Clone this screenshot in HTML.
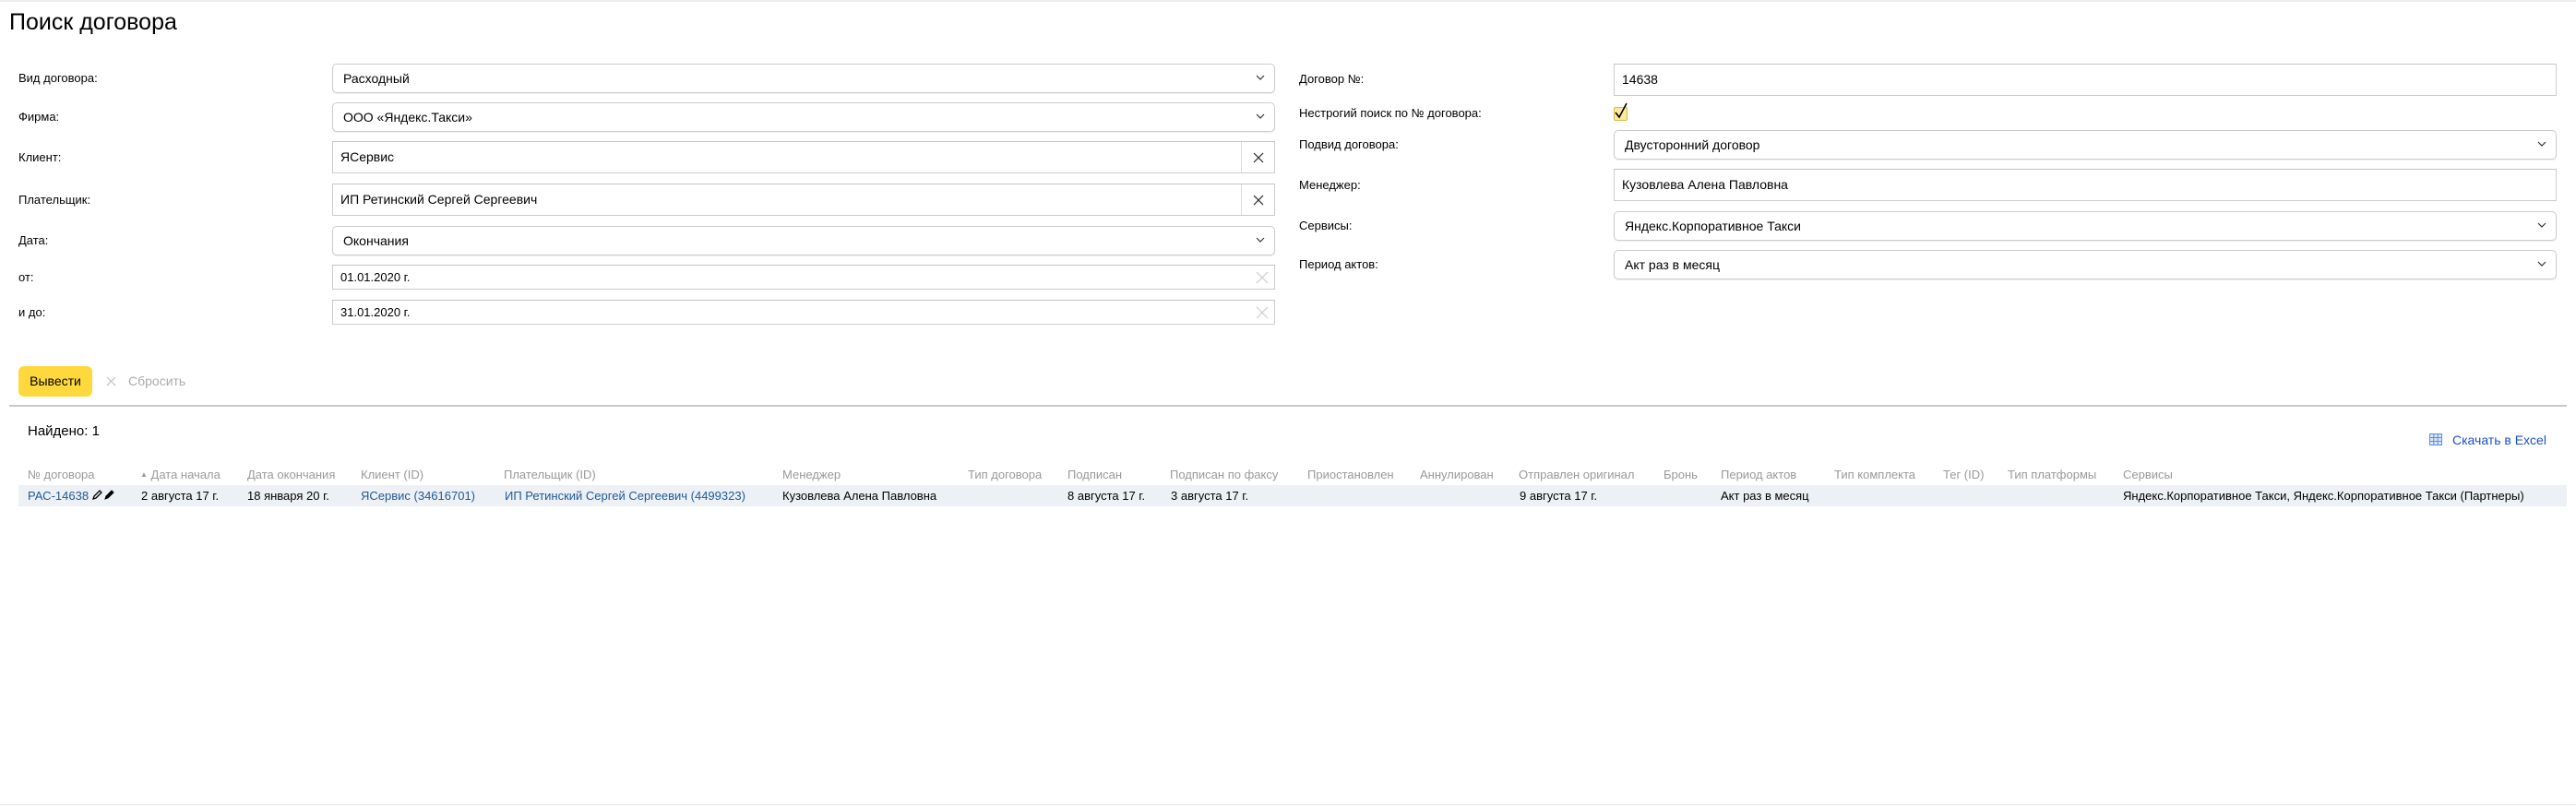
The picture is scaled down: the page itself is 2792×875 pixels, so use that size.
<!DOCTYPE html>
<html><head><meta charset="utf-8">
<style>
*{margin:0;padding:0;box-sizing:border-box}
body{width:2792px;height:875px;position:relative;background:#fff;font-family:"Liberation Sans",Arial,sans-serif;color:#000;overflow:hidden}
.a{position:absolute}
.top{left:0;top:0;width:2792px;height:2px;background:#eee}
.bot{left:0;top:872px;width:2792px;height:1px;background:#e5e5e5}
h1{position:absolute;left:10px;top:10px;font-size:25px;font-weight:normal;color:#000}
.lbl{position:absolute;font-size:13px;line-height:16px;color:#000}
.sel{position:absolute;border:1px solid #ccc;border-radius:5px;font-size:14px;padding-left:11px;box-shadow:0 1px 1px rgba(0,0,0,.08)}
.sel svg{position:absolute;right:10px;top:50%;margin-top:-4px}
.inp{position:absolute;border:1px solid #ccc;border-top-color:#c4c4c4;font-size:14px;padding-left:8px}
.clr{position:absolute;right:0;top:0;bottom:0;width:36px;border-left:1px solid #ddd}
.clr svg{position:absolute;left:50%;top:50%;margin:-6px 0 0 -6px}
.th{position:absolute;top:507px;font-size:13px;color:#999;line-height:16px;white-space:nowrap}
.td{position:absolute;top:530px;font-size:13px;line-height:16px;white-space:nowrap;color:#000}
.lnk{color:#1d5a93}
</style></head><body>
<div class="a top"></div>
<h1>Поиск договора</h1>

<div class="lbl" style="left:20px;top:77px">Вид договора:</div>
<div class="sel" style="left:360px;top:69px;width:1022px;height:32px;line-height:30px">Расходный<svg width="10" height="7" viewBox="0 0 10 7"><path d="M1 1l4 4 4-4" fill="none" stroke="#333" stroke-width="1.2"/></svg></div>
<div class="lbl" style="left:20px;top:119px">Фирма:</div>
<div class="sel" style="left:360px;top:111px;width:1022px;height:32px;line-height:30px">ООО «Яндекс.Такси»<svg width="10" height="7" viewBox="0 0 10 7"><path d="M1 1l4 4 4-4" fill="none" stroke="#333" stroke-width="1.2"/></svg></div>
<div class="lbl" style="left:20px;top:163px">Клиент:</div>
<div class="inp" style="left:360px;top:153px;width:1022px;height:35px;line-height:33px">ЯСервис<div class="clr"><svg width="12" height="12" viewBox="0 0 12 12"><path d="M1 1l10 10M11 1L1 11" stroke="#222" stroke-width="1.2"/></svg></div></div>
<div class="lbl" style="left:20px;top:209px">Плательщик:</div>
<div class="inp" style="left:360px;top:199px;width:1022px;height:35px;line-height:33px">ИП Ретинский Сергей Сергеевич<div class="clr"><svg width="12" height="12" viewBox="0 0 12 12"><path d="M1 1l10 10M11 1L1 11" stroke="#222" stroke-width="1.2"/></svg></div></div>
<div class="lbl" style="left:20px;top:253px">Дата:</div>
<div class="sel" style="left:360px;top:245px;width:1022px;height:32px;line-height:30px">Окончания<svg width="10" height="7" viewBox="0 0 10 7"><path d="M1 1l4 4 4-4" fill="none" stroke="#333" stroke-width="1.2"/></svg></div>
<div class="lbl" style="left:20px;top:293px">от:</div>
<div class="inp" style="left:360px;top:287px;width:1022px;height:27px;line-height:25px;font-size:13px">01.01.2020 г.<svg style="position:absolute;right:6px;top:6px" width="14" height="14" viewBox="0 0 14 14"><path d="M1 1l12 12M13 1L1 13" stroke="#ccc" stroke-width="1.2"/></svg></div>
<div class="lbl" style="left:20px;top:331px">и до:</div>
<div class="inp" style="left:360px;top:325px;width:1022px;height:27px;line-height:25px;font-size:13px">31.01.2020 г.<svg style="position:absolute;right:6px;top:6px" width="14" height="14" viewBox="0 0 14 14"><path d="M1 1l12 12M13 1L1 13" stroke="#ccc" stroke-width="1.2"/></svg></div>

<div class="lbl" style="left:1408px;top:78px">Договор №:</div>
<div class="inp" style="left:1749px;top:69px;width:1022px;height:35px;line-height:33px">14638</div>
<div class="lbl" style="left:1408px;top:115px">Нестрогий поиск по № договора:</div>
<div class="a" style="left:1749px;top:116px;width:15px;height:15px;background:#fde99a;border:1px solid #d9b94a;border-radius:2px"></div>
<svg class="a" style="left:1749px;top:111px" width="16" height="19" viewBox="0 0 16 19"><path d="M2 11l4 5L14 1" fill="none" stroke="#000" stroke-width="1.6"/></svg>
<div class="lbl" style="left:1408px;top:149px">Подвид договора:</div>
<div class="sel" style="left:1749px;top:141px;width:1022px;height:32px;line-height:30px">Двусторонний договор<svg width="10" height="7" viewBox="0 0 10 7"><path d="M1 1l4 4 4-4" fill="none" stroke="#333" stroke-width="1.2"/></svg></div>
<div class="lbl" style="left:1408px;top:193px">Менеджер:</div>
<div class="inp" style="left:1749px;top:183px;width:1022px;height:35px;line-height:33px">Кузовлева Алена Павловна</div>
<div class="lbl" style="left:1408px;top:237px">Сервисы:</div>
<div class="sel" style="left:1749px;top:229px;width:1022px;height:32px;line-height:30px">Яндекс.Корпоративное Такси<svg width="10" height="7" viewBox="0 0 10 7"><path d="M1 1l4 4 4-4" fill="none" stroke="#333" stroke-width="1.2"/></svg></div>
<div class="lbl" style="left:1408px;top:279px">Период актов:</div>
<div class="sel" style="left:1749px;top:271px;width:1022px;height:32px;line-height:30px">Акт раз в месяц<svg width="10" height="7" viewBox="0 0 10 7"><path d="M1 1l4 4 4-4" fill="none" stroke="#333" stroke-width="1.2"/></svg></div>

<div class="a" style="left:20px;top:397px;width:80px;height:33px;background:#ffd83d;border-radius:6px;font-size:14px;line-height:33px;text-align:center">Вывести</div>
<svg class="a" style="left:115px;top:408px" width="11" height="11" viewBox="0 0 11 11"><path d="M1 1l9 9M10 1L1 10" stroke="#bbb" stroke-width="1"/></svg>
<div class="a" style="left:139px;top:405px;font-size:14px;color:#aaa">Сбросить</div>
<div class="a" style="left:10px;top:439px;width:2772px;height:2px;background:#c8c8c8"></div>

<div class="a" style="left:30px;top:459px;font-size:15px">Найдено: 1</div>
<svg class="a" style="left:2633px;top:470px" width="14" height="13" viewBox="0 0 14 13"><rect x="0.5" y="0.5" width="13" height="12" fill="#dbe6fb" stroke="#5b8de0"/><path d="M0 4.5h14M0 8.5h14M4.8 0v13M9.2 0v13" stroke="#5b8de0"/></svg>
<div class="a" style="left:2658px;top:469px;font-size:14px;color:#1a4fcc">Скачать в Excel</div>

<div class="th" style="left:30px">№ договора</div>
<div class="th" style="left:152px"><span style="font-size:8px;vertical-align:2px">▲</span> Дата начала</div>
<div class="th" style="left:268px">Дата окончания</div>
<div class="th" style="left:391px">Клиент (ID)</div>
<div class="th" style="left:546px">Плательщик (ID)</div>
<div class="th" style="left:848px">Менеджер</div>
<div class="th" style="left:1049px">Тип договора</div>
<div class="th" style="left:1157px">Подписан</div>
<div class="th" style="left:1268px">Подписан по факсу</div>
<div class="th" style="left:1417px">Приостановлен</div>
<div class="th" style="left:1539px">Аннулирован</div>
<div class="th" style="left:1646px">Отправлен оригинал</div>
<div class="th" style="left:1803px">Бронь</div>
<div class="th" style="left:1865px">Период актов</div>
<div class="th" style="left:1988px">Тип комплекта</div>
<div class="th" style="left:2106px">Тег (ID)</div>
<div class="th" style="left:2176px">Тип платформы</div>
<div class="th" style="left:2301px">Сервисы</div>

<div class="a" style="left:20px;top:526px;width:2762px;height:23px;background:#edf0f5"></div>
<div class="td lnk" style="left:30px">РАС-14638</div>
<svg class="a" style="left:99px;top:530px" width="26" height="13" viewBox="0 0 26 13"><path d="M2 11l1-3 6-6 2 2-6 6z" fill="none" stroke="#000" stroke-width="1.3"/><path d="M15 11l1-3 6-6 2 2-6 6z" fill="#000" stroke="#000" stroke-width="1"/></svg>
<div class="td" style="left:153px">2 августа 17 г.</div>
<div class="td" style="left:268px">18 января 20 г.</div>
<div class="td lnk" style="left:391px">ЯСервис (34616701)</div>
<div class="td lnk" style="left:547px">ИП Ретинский Сергей Сергеевич (4499323)</div>
<div class="td" style="left:848px">Кузовлева Алена Павловна</div>
<div class="td" style="left:1157px">8 августа 17 г.</div>
<div class="td" style="left:1269px">3 августа 17 г.</div>
<div class="td" style="left:1647px">9 августа 17 г.</div>
<div class="td" style="left:1865px">Акт раз в месяц</div>
<div class="td" style="left:2301px">Яндекс.Корпоративное Такси, Яндекс.Корпоративное Такси (Партнеры)</div>

<div class="a bot"></div>
</body></html>
